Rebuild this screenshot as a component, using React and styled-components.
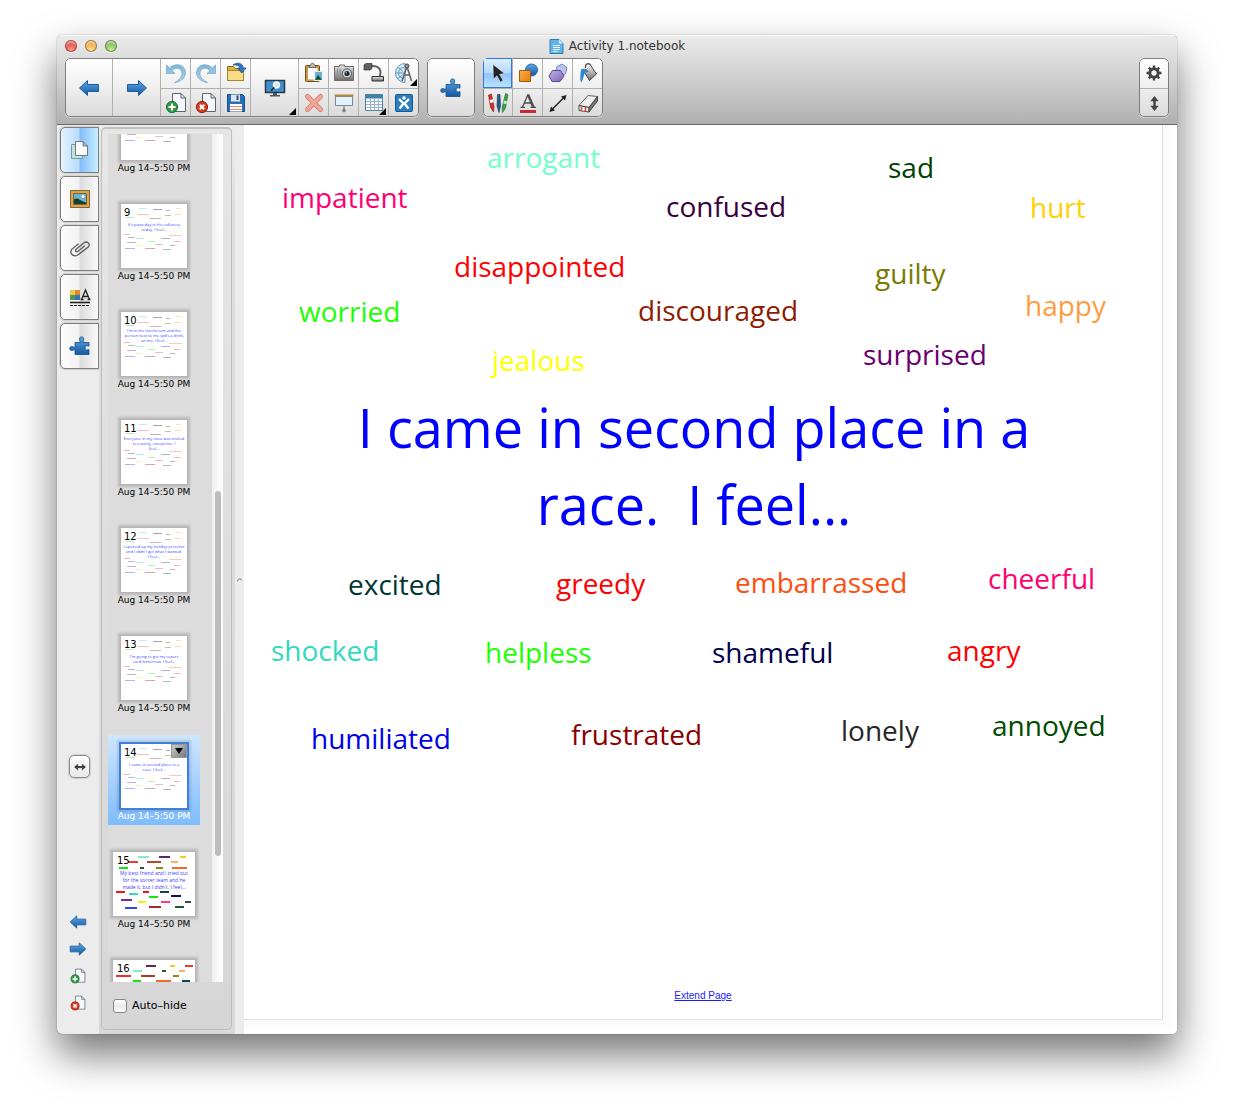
import React from "react";
import styled, { createGlobalStyle, css } from "styled-components";

const uiFont = '"Lucida Grande", "DejaVu Sans", "Noto Sans", sans-serif';
const handFont = '"Comic Sans MS", "Open Sans", "Noto Sans", sans-serif';

const GlobalStyle = createGlobalStyle`
  *, *::before, *::after { box-sizing: border-box; }
  body { margin: 0; background: #fff; font-family: ${uiFont}; color: #000; }
  button { font: inherit; color: inherit; border: 0; margin: 0; padding: 0; background: none; }
  ul { list-style: none; margin: 0; padding: 0; }
  svg { display: block; }
`;

/* ---------- window frame ---------- */

const Desktop = styled.div`
  display: flex;
  height: 100vh;
  min-height: 700px;
  padding: 35px 57px 79px;
`;

const Window = styled.main`
  flex: 1;
  min-width: 0;
  display: flex;
  flex-direction: column;
  background: #ececec;
  border-radius: 5px;
  overflow: hidden;
  box-shadow: 0 0 1px rgba(0, 0, 0, 0.7), 0 20px 40px rgba(0, 0, 0, 0.55);
`;

const Header = styled.header`
  flex: none;
  height: 90px;
  background: linear-gradient(#ebebeb, #d2d2d2 45%, #b0b0b0);
  border-bottom: 1px solid #686868;
  box-shadow: inset 0 1px 0 #f6f6f6;
`;

const TitleBar = styled.div`
  display: grid;
  grid-template-columns: 1fr auto 1fr;
  align-items: center;
  height: 23px;
  padding: 0 8px 1px;
`;

const Lights = styled.div`
  display: flex;
  gap: 8px;
`;

const Light = styled.button`
  width: 12px;
  height: 12px;
  border-radius: 50%;
  background: radial-gradient(circle at 50% 85%, ${(p) => p.$glow}, ${(p) => p.$tone} 65%);
  box-shadow: inset 0 0 0 1px rgba(60, 20, 0, 0.45), inset 0 3px 2px rgba(255, 255, 255, 0.5),
    0 1px 0 rgba(255, 255, 255, 0.7);
`;

const Title = styled.h1`
  display: flex;
  align-items: center;
  gap: 5px;
  margin: 0;
  font-size: 12px;
  line-height: 18px;
  font-weight: 400;
  color: #333;
`;

const Toolbar = styled.div`
  display: flex;
  gap: 8px;
  padding: 0 8px;
`;

const ToolGroup = styled.div`
  position: relative;
  display: grid;
  grid-auto-flow: column;
  grid-template-rows: 31px 28px;
  border-radius: 5px;
  overflow: hidden;
  background: linear-gradient(#fff, #efefef 50%, #dadada);
  box-shadow: 0 1px 0 rgba(255, 255, 255, 0.4);
  ${(p) => p.$end && "margin-left: auto;"}

  &::after {
    content: "";
    position: absolute;
    inset: 0;
    border: 1px solid #7d7d7d;
    border-radius: 5px;
    pointer-events: none;
  }
`;

const Tool = styled.button`
  position: relative;
  display: flex;
  align-items: center;
  justify-content: center;
  width: 30px;
  border-right: 1px solid #b0b0b0;
  border-bottom: 1px solid #b0b0b0;
  ${(p) => p.$tall && css`
    width: 48px;
    grid-row: span 2;
    border-bottom: 0;
  `}
  ${(p) => !p.$tall && css`
    &:nth-child(${p.$odd ? "odd" : "even"}) { border-bottom: 0; }
  `}
  ${(p) => p.$last && "border-right: 0;"}
  ${(p) => p.$active && css`
    z-index: 1;
    background: linear-gradient(#e0efff, #b4d8fd 50%, #8ec5fc 52%, #c0e2ff);
    box-shadow: inset 0 0 0 1px #2d7be0;
  `}
`;

const MenuCorner = styled.span`
  position: absolute;
  right: 2px;
  bottom: 2px;
  width: 7px;
  height: 7px;
  background: #000;
  clip-path: polygon(100% 0, 100% 100%, 0 100%);
`;

/* ---------- body ---------- */

const Body = styled.div`
  flex: 1;
  min-height: 0;
  display: flex;
`;

const Rail = styled.nav`
  flex: none;
  width: 42px;
  display: flex;
  flex-direction: column;
  align-items: center;
  padding: 2px 0 18px 3px;
`;

const Tabs = styled.div`
  display: flex;
  flex-direction: column;
  gap: 3px;
  width: 100%;
`;

const Tab = styled.button`
  display: flex;
  align-items: center;
  justify-content: center;
  width: 100%;
  height: 46px;
  border: 1px solid #7d7d7d;
  border-radius: 5px 0 0 5px;
  background: ${(p) =>
    p.$active
      ? "linear-gradient(90deg, #e4f4ff, #b9dcff 48%, #82bcfb 52%, #c9f0ff)"
      : "linear-gradient(90deg, #fdfdfd, #f2f2f2 48%, #dcdcdc 52%, #fafafa)"};
  box-shadow: 0 0 1px 1px rgba(0, 0, 0, 0.12);
`;

const WidthButton = styled.button`
  display: flex;
  align-items: center;
  justify-content: center;
  width: 21px;
  height: 23px;
  margin: auto 0 130px;
  border: 1px solid #8a8a8a;
  border-radius: 5px;
  background: linear-gradient(#fff, #e9e9e9);
  box-shadow: 0 0 1px 1px rgba(0, 0, 0, 0.12);
`;

const PageActions = styled.div`
  display: flex;
  flex-direction: column;
  padding-right: 3px;
`;

const PageAction = styled.button`
  display: flex;
  align-items: center;
  justify-content: center;
  width: 27px;
  height: 27px;
`;

const Sorter = styled.aside`
  flex: none;
  width: 136px;
  display: flex;
  padding: 2px 3px 4px 2px;
  background: linear-gradient(#ececec, #dedede 10%, #d8d8d8);
`;

const SorterFrame = styled.div`
  flex: 1;
  display: flex;
  flex-direction: column;
  min-height: 0;
  padding: 5px 8px 0 6px;
  border: 1px solid #bdbdbd;
  border-top: 2px solid #c0c0c0;
  border-radius: 5px;
  background: linear-gradient(#e6e6e6, #d6d6d6);
`;

const PageView = styled.div`
  flex: 1;
  min-height: 0;
  display: flex;
  overflow: hidden;
`;

const PageList = styled.ul`
  flex: 1;
  display: flex;
  flex-direction: column;
  gap: 18px;
  margin-top: -47px;
  background: #dcdcdc;
`;

const PageItem = styled.li`
  flex: none;
  display: flex;
  flex-direction: column;
  align-items: center;
  width: 92px;
  height: 90px;
  padding-top: 9px;
  font-size: 9px;
  line-height: 16px;
  ${(p) => p.$active && css`
    color: #fff;
    background: linear-gradient(#cfe6ff, #7fbcfd);
  `}
`;

const Thumb = styled.button`
  position: relative;
  flex: none;
  display: block;
  width: ${(p) => (p.$bold ? 82 : 66)}px;
  height: 64px;
  background: #fff;
  color: #000;
  text-align: center;
  box-shadow: ${(p) =>
    p.$active ? "0 0 0 2px #3f80dc, 0 0 2px 4px rgba(0,0,0,.12)" : "0 0 0 1px #b4b4b4, 0 0 2px 3px #bbb"};
`;

const Scribbles = styled.svg`
  position: absolute;
  inset: 0;
`;

const ThumbNumber = styled.span`
  position: absolute;
  top: 0;
  left: ${(p) => (p.$bold ? 4 : 3)}px;
  font-size: 10px;
  line-height: 18px;
`;

const ThumbText = styled.span`
  position: absolute;
  inset: ${(p) => (p.$lines > 2 && !p.$bold ? 16 : 18)}px 0 auto;
  font-family: ${handFont};
  font-size: ${(p) => (p.$bold ? 5 : 4)}px;
  line-height: ${(p) => (p.$bold ? 7 : 5)}px;
  white-space: pre-line;
  color: #3c3cff;
`;

const ThumbMenu = styled.span`
  position: absolute;
  top: 0;
  right: 0;
  display: flex;
  align-items: center;
  justify-content: center;
  width: 16px;
  height: 14px;
  background: linear-gradient(135deg, #ccc, #777);
  border: 1px solid #999;
`;

const ScrollTrack = styled.div`
  flex: none;
  display: flex;
  justify-content: center;
  width: 11px;
  background: linear-gradient(90deg, #f0f0f0, #fff);
`;

const ScrollThumb = styled.div`
  width: 6px;
  height: 43%;
  margin-top: 357px;
  border-radius: 3px;
  background: #bdbdbd;
`;

const AutoHide = styled.label`
  flex: none;
  display: flex;
  align-items: center;
  gap: 5px;
  height: 47px;
  padding-left: 5px;
  font-size: 11px;
  line-height: 16px;
  white-space: nowrap;
`;

const CheckBox = styled.input`
  appearance: none;
  width: 14px;
  height: 14px;
  margin: 0;
  border: 1px solid #858585;
  border-radius: 3px;
  background: linear-gradient(#fff, #eaeaea 50%, #fdfdfd);
`;

const Splitter = styled.div`
  flex: none;
  display: flex;
  align-items: center;
  justify-content: center;
  width: 9px;
  background: #ececec;
`;

const Stage = styled.section`
  flex: 1;
  min-width: 0;
  display: flex;
  padding: 0 14px 14px 0;
  background: #fafafa;
  box-shadow: inset -10px -10px 8px -4px #fff;
`;

const Page = styled.article`
  position: relative;
  flex: 1;
  min-width: 0;
  overflow: hidden;
  background: #fff;
  border: solid #e2e2e2;
  border-width: 0 1px 1px 0;
  font-family: ${handFont};
`;

const Word = styled.span`
  position: absolute;
  left: ${(p) => p.$x}px;
  top: ${(p) => p.$y}px;
  font-size: 28px;
  line-height: 40px;
  white-space: nowrap;
  color: ${(p) => p.$color};
`;

const Prompt = styled.p`
  position: absolute;
  left: 90px;
  top: 264px;
  width: 720px;
  margin: 0;
  font-size: 54px;
  line-height: 77px;
  text-align: center;
  white-space: pre;
  color: #0000ff;
`;

const PageFoot = styled.footer`
  height: 100%;
  display: flex;
  align-items: flex-end;
  justify-content: center;
  padding-bottom: 16px;
`;

const ExtendLink = styled.a`
  font-family: "Liberation Sans", Arial, sans-serif;
  font-size: 10px;
  line-height: 14px;
  color: #1a1aff;
`;

/* ---------- icons ---------- */

const Icon = ({ size = 22, box = 22, children }) => (
  <svg width={size} height={size} viewBox={`0 0 ${box} ${box}`} fill="none" aria-hidden="true">
    {children}
  </svg>
);

const GradientSheet = styled.svg`
  position: absolute;
`;

const Gradients = () => (
  <GradientSheet width="0" height="0" aria-hidden="true">
    <defs>
      <linearGradient id="blue" x1="0" y1="0" x2="0" y2="1">
        <stop offset="0" stopColor="#5aa9e6" />
        <stop offset="1" stopColor="#1556a0" />
      </linearGradient>
      <linearGradient id="pale" x1="0" y1="0" x2="0" y2="1">
        <stop offset="0" stopColor="#7fb6d8" />
        <stop offset="1" stopColor="#b4d5e8" />
      </linearGradient>
      <linearGradient id="violet" x1="0" y1="0" x2="1" y2="1">
        <stop offset="0" stopColor="#c3b4e6" />
        <stop offset="1" stopColor="#7c62b4" />
      </linearGradient>
      <linearGradient id="orange" x1="0" y1="0" x2="1" y2="1">
        <stop offset="0" stopColor="#ffb14a" />
        <stop offset="1" stopColor="#e8790c" />
      </linearGradient>
      <linearGradient id="steel" x1="0" y1="0" x2="0" y2="1">
        <stop offset="0" stopColor="#e8e8e8" />
        <stop offset="1" stopColor="#6d6d6d" />
      </linearGradient>
    </defs>
  </GradientSheet>
);

const ArrowShape = ({ right, size = 22 }) => (
  <Icon size={size}>
    <path
      transform={right ? "translate(22 0) scale(-1 1)" : undefined}
      d="M1.500 11 9.500 3.500V7.500H20.500V14.500H9.500V18.500Z"
      fill="url(#blue)"
      stroke="#1b5c9e"
      strokeWidth="1"
    />
  </Icon>
);

const UndoShape = ({ redo }) => (
  <Icon>
    <path
      transform={redo ? "translate(22 0) scale(-1 1)" : undefined}
      d="M1.500 3V11.500H10L7 8.600C10 5 16.500 5.500 17 11C17.300 15 13.500 18.500 9.500 20.500C15.500 20 20.500 16 20.500 10.500C20 2 10 .5 4.600 6Z"
      fill="url(#pale)"
      stroke="#6fa5c8"
      strokeWidth=".7"
    />
  </Icon>
);

const Sheet = () => (
  <path d="M7.500 1.500H16L20.500 6V19.500H7.500Z M16 1.500V6H20.500" fill="#f4f8fc" stroke="#5b6670" />
);

const AddPage = ({ size }) => (
  <Icon size={size}>
    <Sheet />
    <circle cx="7" cy="15" r="5.600" fill="#2f9a43" stroke="#1c6e2c" />
    <path d="M7 11.500v7M3.500 15h7" stroke="#fff" strokeWidth="2" />
  </Icon>
);

const DeletePage = ({ size }) => (
  <Icon size={size}>
    <Sheet />
    <circle cx="7" cy="15" r="5.600" fill="#d93a20" stroke="#96200e" />
    <path d="M4.800 12.800l4.400 4.400M9.200 12.800l-4.400 4.400" stroke="#fff" strokeWidth="2.200" />
  </Icon>
);

const FolderIcon = () => (
  <Icon>
    <path d="M2.500 4.500h6l1.500 2h8.500v12h-16z" fill="#e0b23f" stroke="#8f6a16" />
    <path d="M2.500 8.500h16v10h-16z" fill="#f8dd86" stroke="#a8822c" />
    <path d="M8 3C12-.3 18 1 18.300 6H21l-4.300 5L12.500 6H15C15 4 12 2.500 8 3Z" fill="#2f78c0" stroke="#174d88" strokeWidth=".7" />
  </Icon>
);

const DiskIcon = () => (
  <Icon>
    <path d="M2.500 2.500h15l2 2v15h-17z" fill="#2870b5" stroke="#184c82" />
    <path d="M6 2.500h9v7H6z" fill="#dce6ee" />
    <path d="M11.500 3.500h2v4.500h-2z" fill="#284c70" />
    <path d="M5 12h12v7.500H5z" fill="#fff" />
    <path d="M5 14.500h12M5 17.500h12" stroke="#e88a7a" />
  </Icon>
);

const MonitorIcon = () => (
  <Icon>
    <path d="M1.500 3.500h19v12h-19z" fill="#3e92cf" stroke="#2b3944" strokeWidth="1.500" />
    <path d="M9 16h4v2h3v1.500H6V18h3z" fill="#4a5560" />
    <circle cx="12.500" cy="8" r="3" fill="#cfe9fa" stroke="#fff" strokeWidth="1.300" />
    <path d="M10.300 10.400 7 13.700" stroke="#222" strokeWidth="1.600" />
  </Icon>
);

const PasteIcon = () => (
  <Icon>
    <rect x="2.500" y="3.500" width="14" height="16" rx="1" fill="#c99a4a" stroke="#6f4d17" />
    <path d="M5 6h9.500v11.500H5z" fill="#fafafa" />
    <path d="M6 5.500C6 3.500 8 4 8 2c.5-1 2.500-1 3 0 0 2 2 1.500 2 3.500z" fill="#bbb" stroke="#555" strokeWidth=".8" />
    <path d="M11.500 9.500h8v9h-8z" fill="#5fb2d6" stroke="#eee" strokeWidth="1.200" />
    <path d="M12 17.800 15 13l4 4.800z" fill="#174c3c" />
  </Icon>
);

const CameraIcon = () => (
  <Icon>
    <path d="M1.500 4.500h5V3h5v1.500h9v14h-19z" fill="url(#steel)" stroke="#6c6c6c" />
    <path d="M4.500 6.500v10M7 6.500v10" stroke="#888" />
    <circle cx="14" cy="11.500" r="4.600" fill="#d6d6d6" stroke="#555" />
    <circle cx="14" cy="11.500" r="2.600" fill="#1e2b38" />
    <circle cx="13.200" cy="10.700" r=".8" fill="#8fc6f0" />
  </Icon>
);

const DocCameraIcon = () => (
  <Icon>
    <path d="M7 4.500C13 3 17.500 6 17.500 10c0 3-1 4-1 6" stroke="#666" strokeWidth="2" />
    <path d="M1 3 3 1.500h6V6.500L7 8H1z" fill="#6a5f5f" stroke="#333" strokeWidth=".7" />
    <path d="M9 14.500h11.500v4.500H9z" fill="url(#steel)" stroke="#333" />
  </Icon>
);

const MeasureIcon = () => (
  <Icon>
    <path d="M12 1.500A9.500 9.500 0 0 0 12 20.500Z" fill="#d7ecf8" stroke="#5d98c0" />
    <path d="M11 5.500A5.500 5.500 0 0 0 11 16.500M3 11h8M5 5.500l5 4M5 16.500l5-4" stroke="#5d98c0" />
    <path d="M14 4.500 9 19M14 4.500 18.500 19M11 13h6" stroke="#666" strokeWidth="1.600" />
    <circle cx="14" cy="4" r="2" fill="#999" stroke="#444" />
  </Icon>
);

const DeleteIcon = () => (
  <Icon>
    <path d="M4.500 4.500 17.500 17.500M17.500 4.500 4.500 17.500" stroke="#cf8072" strokeWidth="5" strokeLinecap="round" />
    <path d="M4.500 4.500 17.500 17.500M17.500 4.500 4.500 17.500" stroke="#f0a596" strokeWidth="3.400" strokeLinecap="round" />
  </Icon>
);

const ScreenShadeIcon = () => (
  <Icon>
    <path d="M2.500 4.500h17v9h-17z" fill="#e4f3fb" stroke="#7d8a92" />
    <path d="M1.500 3.500h19" stroke="#b48a3a" strokeWidth="2" />
    <path d="M11 14v4" stroke="#777" />
    <circle cx="11" cy="18.500" r="1.400" fill="#999" stroke="#555" strokeWidth=".6" />
  </Icon>
);

const TableIcon = () => (
  <Icon>
    <path d="M2.500 2.500h17v16h-17z" fill="#fff" stroke="#4b7f9f" />
    <path d="M3 3h16v3.500H3z" fill="#3f82ad" />
    <path d="M3 9.500h16M3 12.500h16M3 15.500h16M7.500 7v11.500M11.500 7v11.500M15.500 7v11.500" stroke="#8fb4cc" />
  </Icon>
);

const ResponseIcon = () => (
  <Icon>
    <rect x="2.500" y="2.500" width="17" height="17" rx="1" fill="#2b7fc0" stroke="#15588f" />
    <path d="M6 7 10.500 11.500 6.500 16.500M16 7l-4.500 4.500 4 5" stroke="#fff" strokeWidth="2.400" />
    <circle cx="11" cy="6" r="1.800" fill="#fff" />
  </Icon>
);

const PuzzleIcon = () => (
  <Icon>
    <path
      d="M6 7.500h5.500C11 6 10.500 5.500 10.500 4a2 2 0 0 1 4.200 0c0 1.500-.7 2-.7 3.500h6v3.700c-2.500-1-4 0-4 1.700s1.500 2.600 4 1.700v4.900H6V14.800c-1.500-.3-2 .7-3.300.7a2 2 0 0 1 0-4c1.300 0 2 1 3.300.7z"
      fill="url(#blue)"
      stroke="#184f86"
      strokeWidth=".8"
    />
  </Icon>
);

const PointerIcon = () => (
  <Icon>
    <path d="M6 2.500 17.500 11.500 12.500 12.300 16 18.500 13.300 20 10 13.700 6.500 17Z" fill="#222" stroke="#fff" strokeWidth=".4" />
  </Icon>
);

const ShapesIcon = () => (
  <Icon>
    <circle cx="14.500" cy="8" r="6" fill="url(#blue)" stroke="#2a6aa8" />
    <path d="M2.500 8.500h11v11h-11z" fill="url(#orange)" stroke="#a35a10" />
  </Icon>
);

const PolygonIcon = () => (
  <Icon>
    <path d="M10 4.500 15 2l5 3.500L18.500 12 13 14 8.500 10z" fill="#b8c4ee" stroke="#7b86c0" />
    <path d="M5.500 8.500h8l3.500 5.500-4 5.500h-8L2 14z" fill="url(#violet)" stroke="#5d458f" />
  </Icon>
);

const FillIcon = () => (
  <Icon>
    <path d="M8.500 6C8 1 13.500 0 14 5" stroke="#555" strokeWidth="1.400" />
    <path d="M7 9.500 14 4 19.500 12 12.500 18.500z" fill="url(#steel)" stroke="#444" />
    <path d="M9 8.500 14 4" stroke="#fff" />
    <path d="M4 7.500C7 5.500 10.500 8 12 10L8 10.500C6.500 13 6.500 17 4.500 20.500 2.500 19 3.500 12 4 7.500z" fill="#2f88cc" />
  </Icon>
);

const PensIcon = () => (
  <Icon>
    <path d="M1.500 3 4.500 2l2.500 12.500-.5 5.500L3.500 15.500z" fill="#d22f2f" stroke="#8f1c1c" strokeWidth=".6" />
    <path d="M2.600 8l3.300-.8.6 3-3.300.8z" fill="#fff" />
    <path d="M10.500 2.500h2.500L13.500 14l-1.500 6.500L10 14z" fill="#2b5c8c" stroke="#16344f" strokeWidth=".6" />
    <path d="M18.500 1.500 21 2.500 18.500 16l-3 4.500-.2-5.500z" fill="#36a04a" stroke="#1c6e2c" strokeWidth=".6" />
    <path d="M17 8.500l3 .8-.6 3-3-.8z" fill="#c9ecc9" />
  </Icon>
);

const TextIcon = () => (
  <Icon>
    <path d="M5.500 15 11 2.500M7.500 11h7M3.500 15.300h4.500M13.500 15.300H19" stroke="#4f4f4f" strokeWidth="1.300" />
    <path d="M11 2.500l5.500 13" stroke="#4f4f4f" strokeWidth="2.600" />
    <path d="M3 19.500h16" stroke="#c22a35" strokeWidth="3" />
  </Icon>
);

const LineIcon = () => (
  <Icon>
    <path d="M4 18.500 18 4.500" stroke="#222" strokeWidth="1.400" />
    <path d="M2.500 20 4 14.500 8 18.500zM19.500 3 18 8.500 14 4.500z" fill="#222" />
  </Icon>
);

const EraserIcon = () => (
  <Icon>
    <path d="M2 13.500 11 3.500l9.500 1L12 15.500z" fill="#eee" stroke="#666" />
    <path d="M2 13.500 12 15.500V20L2 18.500z" fill="#fff" stroke="#444" />
    <path d="M12 15.500 20.500 4.500V9L12 20z" fill="#777" stroke="#444" />
    <path d="M4.500 14.500v4M8.500 15v4.500" stroke="#e0533d" strokeWidth="1.800" />
  </Icon>
);

const GearIcon = () => (
  <Icon size={16} box={16}>
    <circle cx="8" cy="8" r="4.200" stroke="#444" strokeWidth="3" />
    <path
      d="M8 .5v3M8 12.500v3M.5 8h3M12.500 8h3M2.700 2.700l2 2M11.300 11.300l2 2M2.700 13.300l2-2M11.300 4.700l2-2"
      stroke="#444"
      strokeWidth="2.400"
    />
  </Icon>
);

const DoubleArrow = ({ wide }) => (
  <Icon size={wide ? 12 : 15} box={16}>
    <path
      transform={wide ? "rotate(90 8 8)" : undefined}
      d="M8 0 12.500 5.500H9.300V10.500H12.500L8 16 3.500 10.500H6.700V5.500H3.500Z"
      fill="#444"
    />
  </Icon>
);

const PagesIcon = () => (
  <Icon>
    <path d="M2.500 5.500h11v14h-11z" fill="#bfe3e3" stroke="#779a9a" />
    <path d="M6.500 2.500H14L18.500 7V16.500H6.500z M14 2.500V7h4.500" fill="#fafafa" stroke="#777" />
  </Icon>
);

const PictureIcon = () => (
  <Icon>
    <path d="M1.500 2.500h19v17h-19z" fill="#d2a55d" stroke="#8b6428" />
    <path d="M4.500 5.500h13v11h-13z" fill="#6eb2cc" stroke="#8b6428" />
    <path d="M5 16V11.500C9 8.500 12 14 17 14.500V16z" fill="#173e2c" />
    <circle cx="14" cy="8.500" r="1.500" fill="#fff" />
  </Icon>
);

const ClipIcon = () => (
  <Icon>
    <path
      d="M15.500 8 9.500 14.500C8 16 6 14.500 7.300 12.800L14 5.500C16.800 2.500 21.500 5.500 19 9L10.500 17.500C7 21.500 .5 18.500 3 13.500L9 7"
      transform="rotate(8 11 11)"
      stroke="#5c5c5c"
      strokeWidth="1.300"
    />
  </Icon>
);

const PropertiesIcon = () => (
  <Icon>
    <path d="M1 4h5v5H1z" fill="#e8c94a" />
    <path d="M6 4h5v5H6z" fill="#e08a2a" />
    <path d="M1 9h5v5H1z" fill="#4f9a50" />
    <path d="M6 9h5v5H6z" fill="#3c6fb4" />
    <path d="M12.500 13.500 16.500 4l4 9.500M14 10.500h5M11.500 13.500h3M18.500 13.500h3" stroke="#222" strokeWidth="1.300" />
    <path d="M1 16.500h20" stroke="#222" strokeWidth="1.600" />
    <path d="M1 19.500h20" stroke="#222" strokeDasharray="3 1" />
  </Icon>
);

const NotebookIcon = () => (
  <Icon size={15} box={15}>
    <path d="M1 .5h9L14 4.500v10H1z" fill="#5fb4e8" stroke="#2f7db4" />
    <path d="M10 .5v4h4z" fill="#d5eefb" />
    <path d="M4 6.500h7M4 8.500h7M4 10.500h7M4 12.500h5" stroke="#e8f6fe" />
  </Icon>
);

/* ---------- data ---------- */

const mainTools = [
  { label: "Undo", icon: <UndoShape /> },
  { label: "Add page", icon: <AddPage /> },
  { label: "Redo", icon: <UndoShape redo /> },
  { label: "Delete page", icon: <DeletePage /> },
  { label: "Open", icon: <FolderIcon /> },
  { label: "Save", icon: <DiskIcon /> },
];

const insertTools = [
  { label: "Paste", icon: <PasteIcon /> },
  { label: "Delete", icon: <DeleteIcon /> },
  { label: "Capture", icon: <CameraIcon /> },
  { label: "Screen shade", icon: <ScreenShadeIcon /> },
  { label: "Document camera", icon: <DocCameraIcon /> },
  { label: "Table", icon: <TableIcon />, menu: true },
  { label: "Measurement tools", icon: <MeasureIcon />, menu: true },
  { label: "Response", icon: <ResponseIcon /> },
];

const drawTools = [
  { label: "Select", icon: <PointerIcon />, active: true },
  { label: "Pens", icon: <PensIcon /> },
  { label: "Shapes", icon: <ShapesIcon /> },
  { label: "Text", icon: <TextIcon /> },
  { label: "Regular polygons", icon: <PolygonIcon /> },
  { label: "Lines", icon: <LineIcon /> },
  { label: "Fill", icon: <FillIcon /> },
  { label: "Eraser", icon: <EraserIcon /> },
];

const tabs = [
  { label: "Page sorter", icon: <PagesIcon /> },
  { label: "Gallery", icon: <PictureIcon /> },
  { label: "Attachments", icon: <ClipIcon /> },
  { label: "Properties", icon: <PropertiesIcon /> },
  { label: "Add-ons", icon: <PuzzleIcon /> },
];

const stamp = "Aug 14–5:50 PM";

const pages = [
  { id: 8, stamp },
  { id: 9, number: 9, stamp, text: "It's pizza day in the cafeteria\ntoday.  I feel..." },
  { id: 10, number: 10, stamp, text: "I'm in the lunchroom and the\nperson next to me spills a drink\non me.  I feel..." },
  { id: 11, number: 11, stamp, text: "Everyone in my class was invited\nto a party, except me.  I\nfeel..." },
  { id: 12, number: 12, stamp, text: "I opened up my holiday presents\nand I didn't get what I wanted.\nI feel..." },
  { id: 13, number: 13, stamp, text: "I'm going to get my report\ncard tomorrow.  I feel..." },
  { id: 14, number: 14, stamp, text: "I came in second place in a\nrace.  I feel...", active: true },
  { id: 15, number: 15, stamp, text: "My best friend and I tried out\nfor the soccer team and he\nmade it, but I didn't.  I feel...", bold: true },
  { id: 16, number: 16, bold: true },
];

/* x, y, width, colour of each word mark on a page miniature */
const softMarks = [
  [18, 4, 8, "#9fe8d4"], [32, 5, 9, "#8a6a90"], [45, 6, 4, "#789878"], [55, 4, 6, "#f6dc90"],
  [16, 10, 12, "#f59a9a"], [44, 11, 6, "#a8a870"], [54, 10, 6, "#fac898"],
  [5, 13, 8, "#90e890"], [29, 14, 11, "#c08a80"],
  [3, 30, 6, "#f08a8a"], [7, 33, 7, "#80a0a0"], [48, 31, 13, "#f8b090"],
  [15, 34, 8, "#8adccc"], [27, 37, 7, "#88ee88"], [40, 34, 9, "#8a8aa8"],
  [6, 38, 9, "#a880a8"], [53, 37, 6, "#f08a8a"], [34, 40, 8, "#f090c0"], [49, 41, 5, "#909090"],
  [15, 41, 6, "#f4ee80"], [4, 44, 10, "#8a8af0"], [24, 44, 10, "#b87878"], [42, 45, 8, "#80a080"],
];

const boldMarks = [
  [25, 4, 11, "#7eefcc"], [46, 4, 11, "#5b2a60"], [67, 4, 6, "#f5c928"],
  [15, 9, 10, "#f03c30"], [34, 9, 14, "#b84a30"], [58, 9, 7, "#f9b066"],
  [6, 15, 9, "#14e814"], [27, 15, 4, "#256025"], [43, 15, 7, "#8a8a14"], [59, 15, 15, "#f56a28"],
  [3, 39, 9, "#f01818"], [16, 41, 9, "#38d8c0"], [30, 39, 6, "#f01818"], [47, 39, 9, "#104848"],
  [36, 44, 9, "#14e814"], [58, 43, 10, "#101068"], [8, 47, 11, "#8a2a8a"],
  [25, 49, 8, "#f4ee14"], [48, 49, 9, "#f53a90"], [72, 49, 6, "#484848"],
  [12, 55, 12, "#3048f0"], [36, 54, 12, "#983028"], [62, 54, 9, "#205a20"],
];

const topBoldMarks = [
  [33, 5, 10, "#5b2a60"], [57, 5, 5, "#f5c928"], [72, 5, 8, "#f03c30"],
  [20, 10, 9, "#7eefcc"], [49, 10, 4, "#256025"], [66, 10, 6, "#f9b066"],
  [3, 15, 15, "#f03030"], [28, 15, 14, "#b03a24"], [60, 15, 6, "#8a8a14"],
  [20, 20, 8, "#14e814"], [43, 20, 15, "#f56a28"], [69, 20, 8, "#104848"],
];

const words = [
  ["arrogant", 243, 12, "#72ffc9"],
  ["impatient", 38, 52, "#ff0072"],
  ["sad", 644, 22, "#004000"],
  ["confused", 422, 61, "#39003d"],
  ["hurt", 786, 62, "#ffcf00"],
  ["disappointed", 210, 121, "#ff0000"],
  ["guilty", 631, 128, "#7b7b00"],
  ["worried", 55, 166, "#1cff00"],
  ["discouraged", 394, 165, "#8f1c00"],
  ["happy", 781, 160, "#ff9c42"],
  ["jealous", 248, 215, "#ffff00"],
  ["surprised", 619, 209, "#6b006e"],
  ["excited", 104, 439, "#003733"],
  ["greedy", 312, 438, "#ff0000"],
  ["embarrassed", 491, 437, "#ff4d0d"],
  ["cheerful", 744, 433, "#ff006e"],
  ["shocked", 27, 505, "#33d9bd"],
  ["helpless", 241, 507, "#1cff00"],
  ["shameful", 468, 507, "#00004f"],
  ["angry", 703, 505, "#ff0000"],
  ["humiliated", 67, 593, "#0000e6"],
  ["frustrated", 327, 589, "#8a0000"],
  ["lonely", 597, 585, "#262626"],
  ["annoyed", 748, 580, "#004b00"],
];

/* ---------- parts ---------- */

const SmallTools = ({ tools, odd, closing }) =>
  tools.map((t, i) => (
    <Tool
      key={t.label}
      type="button"
      aria-label={t.label}
      $odd={odd}
      $active={t.active}
      $last={closing && i >= tools.length - 2}
    >
      {t.icon}
      {t.menu && <MenuCorner />}
    </Tool>
  ));

const Miniature = ({ id, number, text, stamp: time, active, bold }) => {
  const marks = id === 16 ? topBoldMarks : bold ? boldMarks : softMarks;
  return (
    <PageItem $active={active}>
      <Thumb type="button" aria-label={`Page ${id}`} $active={active} $bold={bold}>
        <Scribbles width={bold ? 82 : 66} height="64" opacity={bold ? 1 : 0.65} aria-hidden="true">
          {marks.map(([x, y, w, c]) => (
            <rect key={`${x}-${y}`} x={x} y={y} width={w} height={bold ? 2 : 1} fill={c} />
          ))}
        </Scribbles>
        {number && <ThumbNumber $bold={bold}>{number}</ThumbNumber>}
        {text && (
          <ThumbText $bold={bold} $lines={text.split("\n").length}>
            {text}
          </ThumbText>
        )}
        {active && (
          <ThumbMenu>
            <svg width="8" height="6" aria-hidden="true">
              <path d="M0 0h8L4 6z" fill="#000" />
            </svg>
          </ThumbMenu>
        )}
      </Thumb>
      {time}
    </PageItem>
  );
};

export default function App() {
  return (
    <Desktop>
      <GlobalStyle />
      <Gradients />
      <Window>
        <Header>
          <TitleBar>
            <Lights>
              <Light type="button" aria-label="Close" $tone="#e0443e" $glow="#ff9d94" />
              <Light type="button" aria-label="Minimize" $tone="#e9a23a" $glow="#ffe59a" />
              <Light type="button" aria-label="Zoom" $tone="#6fb84c" $glow="#c8f59a" />
            </Lights>
            <Title>
              <NotebookIcon />
              Activity 1.notebook
            </Title>
          </TitleBar>
          <Toolbar>
            <ToolGroup>
              <Tool type="button" aria-label="Previous page" $tall><ArrowShape /></Tool>
              <Tool type="button" aria-label="Next page" $tall><ArrowShape right /></Tool>
              <SmallTools tools={mainTools} />
              <Tool type="button" aria-label="View screens" $tall>
                <MonitorIcon />
                <MenuCorner />
              </Tool>
              <SmallTools tools={insertTools} odd closing />
            </ToolGroup>
            <ToolGroup>
              <Tool type="button" aria-label="Add-ons" $tall $last><PuzzleIcon /></Tool>
            </ToolGroup>
            <ToolGroup>
              <SmallTools tools={drawTools} closing />
            </ToolGroup>
            <ToolGroup $end>
              <Tool type="button" aria-label="Customize toolbar" $last><GearIcon /></Tool>
              <Tool type="button" aria-label="Move toolbar" $last><DoubleArrow /></Tool>
            </ToolGroup>
          </Toolbar>
        </Header>

        <Body>
          <Rail>
            <Tabs>
              {tabs.map((t, i) => (
                <Tab key={t.label} type="button" aria-label={t.label} $active={i === 0}>
                  {t.icon}
                </Tab>
              ))}
            </Tabs>
            <WidthButton type="button" aria-label="Move sidebar"><DoubleArrow wide /></WidthButton>
            <PageActions>
              <PageAction type="button" aria-label="Previous page"><ArrowShape size={18} /></PageAction>
              <PageAction type="button" aria-label="Next page"><ArrowShape right size={18} /></PageAction>
              <PageAction type="button" aria-label="Add page"><AddPage size={16} /></PageAction>
              <PageAction type="button" aria-label="Delete page"><DeletePage size={16} /></PageAction>
            </PageActions>
          </Rail>

          <Sorter>
            <SorterFrame>
              <PageView>
                <PageList>
                  {pages.map((p) => <Miniature key={p.id} {...p} />)}
                </PageList>
                <ScrollTrack><ScrollThumb /></ScrollTrack>
              </PageView>
              <AutoHide>
                <CheckBox type="checkbox" />
                Auto–hide
              </AutoHide>
            </SorterFrame>
          </Sorter>

          <Splitter>
            <svg width="5" height="4" aria-hidden="true">
              <path d="M.5 3.500C1 0 4 0 4.500 2.500" stroke="#777" fill="none" />
            </svg>
          </Splitter>

          <Stage>
            <Page>
              {words.map(([text, x, y, color]) => (
                <Word key={text} $x={x} $y={y} $color={color}>{text}</Word>
              ))}
              <Prompt>{"I came in second place in a\nrace.  I feel..."}</Prompt>
              <PageFoot>
                <ExtendLink href="#extend">Extend Page</ExtendLink>
              </PageFoot>
            </Page>
          </Stage>
        </Body>
      </Window>
    </Desktop>
  );
}
